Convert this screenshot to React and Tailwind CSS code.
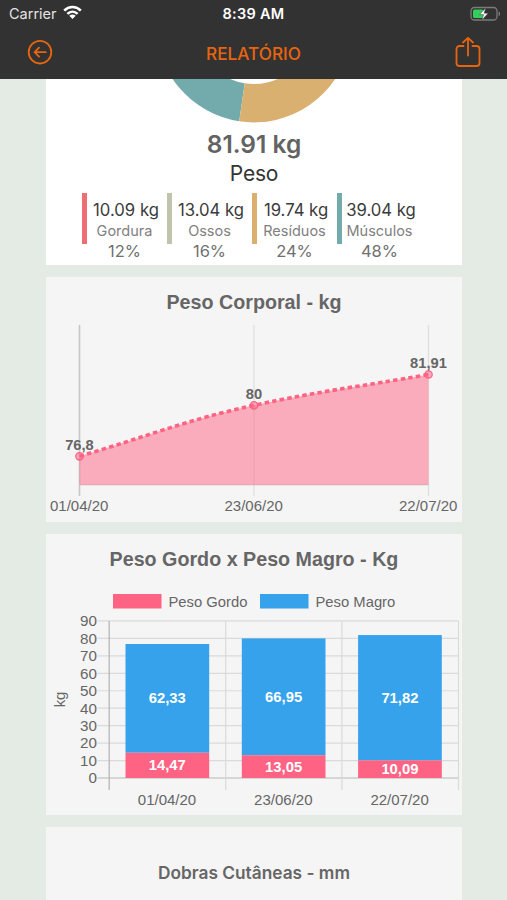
import React from 'react'

const composition = [
	{ value: '10.09 kg', label: 'Gordura', percent: '12%', color: 'bg-[#ee6e73]' },
	{ value: '13.04 kg', label: 'Ossos', percent: '16%', color: 'bg-[#bfc4ad]' },
	{ value: '19.74 kg', label: 'Resíduos', percent: '24%', color: 'bg-[#d9b06f]' },
	{ value: '39.04 kg', label: 'Músculos', percent: '48%', color: 'bg-[#73abad]' },
]

const weights = [
	{ date: '01/04/20', label: '76,8', x: 33.5, y: 179.3 },
	{ date: '23/06/20', label: '80', x: 208, y: 128.3 },
	{ date: '22/07/20', label: '81,91', x: 382.5, y: 97.5 },
]

const masses = [
	{ date: '01/04/20', fat: 14.47, lean: 62.33 },
	{ date: '23/06/20', fat: 13.05, lean: 66.95 },
	{ date: '22/07/20', fat: 10.09, lean: 71.82 },
]

const ticks = [0, 10, 20, 30, 40, 50, 60, 70, 80, 90]

const format = (n) => n.toFixed(2).replace('.', ',')

function StatusBar() {
	return (
		<div className="grid grid-cols-3 items-center h-[27px] pl-[9px] pr-[6px] pt-px text-[14.5px] leading-none text-white">
			<div className="flex items-center gap-[6px]">
				<span className="text-[#e2e2e2] tracking-[0px]">Carrier</span>
				<svg width="19" height="15" viewBox="0 0 19 15" fill="none" stroke="#fff" strokeWidth="2.6" className="-mt-[3px]">
					<path d="M1.2 5.6C6 .8 13 .8 17.8 5.6" />
					<path d="M4.4 8.9C7.4 6 11.6 6 14.6 8.9" />
					<path d="M9.5 14L6.3 10.8C8.2 9.2 10.8 9.2 12.7 10.8Z" fill="#fff" stroke="none" />
				</svg>
			</div>
			<span className="-ml-[3px] text-center font-semibold tracking-[0.3px]">8:39 AM</span>
			<svg width="31" height="16" viewBox="0 0 31 16" className="justify-self-end -mt-px">
				<rect x="1" y="1.5" width="26" height="12.5" rx="3.5" fill="none" stroke="#7c7c7c" strokeWidth="1.3" />
				<path d="M28.6 5.5v4.5c2-.6 2-3.9 0-4.5z" fill="#7c7c7c" />
				<rect x="3" y="3.5" width="10.5" height="8.5" rx="1.5" fill="#33cf5c" />
				<path d="M15.8 1.8L9.5 8.6h4l-1.7 5.6 6.4-7h-4z" fill="#fff" stroke="#323232" strokeWidth=".5" />
			</svg>
		</div>
	)
}

function Header() {
	return (
		<header className="h-[79px] shrink-0 bg-[#323232]">
			<StatusBar />
			<div className="flex items-center justify-between h-[52px] pl-[27px] pr-[26px]">
				<svg width="26" height="26" viewBox="0 0 26 26" fill="none" stroke="#e8650f" strokeWidth="1.8" strokeLinecap="round" strokeLinejoin="round">
					<circle cx="13" cy="12.2" r="11.3" />
					<path d="M18.8 12.2H7.6M12 7.7L7.6 12.2L12 16.7" />
				</svg>
				<h1 className="-ml-px pt-[2px] text-[17.2px] font-medium text-[#e8650f]">RELATÓRIO</h1>
				<svg width="26" height="32" viewBox="0 0 26 32" fill="none" stroke="#e8650f" strokeWidth="1.8" strokeLinecap="round" strokeLinejoin="round" className="-mt-[2px]">
					<path d="M8.5 10H4.5a3 3 0 0 0-3 3v14a3 3 0 0 0 3 3h17a3 3 0 0 0 3-3V13a3 3 0 0 0-3-3h-4" />
					<path d="M13 19.5V2M8 6.5L13 1.8L18 6.5" />
				</svg>
			</div>
		</header>
	)
}

function CompositionCard() {
	return (
		<section className="h-[186px] bg-white text-center">
			{/* lower part of the donut, the rest is scrolled under the header */}
			<svg width="416" height="44" viewBox="0 0 416 44" className="block">
				<path d="M193.2 42.3A98 98 0 0 1 110 -55L148.5 -55A59.5 59.5 0 0 0 198.7 4.3Z" fill="#73abad" />
				<path d="M193.2 42.3A98 98 0 0 0 303.7 -34.1L266.1 -42.3A59.5 59.5 0 0 1 198.7 4.3Z" fill="#d9b06f" />
			</svg>
			<p className="mt-[7px] text-[24.5px] leading-[29px] font-semibold text-[#636363]">81.91 kg</p>
			<p className="text-[21px] leading-[29px] text-[#333] tracking-[-0.2px]">Peso</p>
			<div className="mt-[5px] ml-[36px] flex">
				{composition.map((item) => (
					<div key={item.label} className="flex w-[85px]">
						<span className={`w-[5px] h-[51px] shrink-0 ${item.color}`} />
						<div className="w-[78px] pt-[7px]">
							<p className="text-[16.7px] leading-[21px] text-[#3b3b3b] whitespace-nowrap">{item.value}</p>
							<p className="-ml-[3px] text-[14.5px] leading-[20px] text-[#808080]">{item.label}</p>
							<p className="-ml-[3px] pt-px text-[16.5px] leading-[19px] text-[#707070]">{item.percent}</p>
						</div>
					</div>
				))}
			</div>
		</section>
	)
}

function WeightCard() {
	const curve = 'M33.5 179.3C103.3 158.9 138 143.5 208 128.3C277 113.5 312.7 109.8 382.5 97.5'

	return (
		<section className="h-[245px] bg-[#f5f5f5]">
			<svg width="416" height="245" viewBox="0 0 416 245" fontFamily="Liberation Sans, Arial, sans-serif" fontSize="14.7" fill="#666" textAnchor="middle">
				<text x="208" y="31.5" fontSize="19.7" fontWeight="bold">Peso Corporal - kg</text>
				{weights.map((p, i) => (
					<path key={p.date} d={`M${p.x} 48V219`} stroke={i === 0 ? '#c6c6c6' : '#dfdfdf'} strokeWidth={i === 0 ? 1.6 : 1.3} />
				))}
				<path d="M33.5 208H382.5" stroke="#d6d6d6" strokeWidth="1.2" />
				<path d={`${curve}V208H33.5Z`} fill="#ff6384" fillOpacity=".5" />
				<path d={curve} fill="none" stroke="#ff6384" strokeWidth="3.6" strokeDasharray="4.5 3.2" />
				{weights.map((p) => (
					<g key={p.date}>
						<circle cx={p.x} cy={p.y} r="3.7" fill="#ff6384" fillOpacity=".5" stroke="#ff6384" strokeWidth="1.3" />
						<text x={p.x} y={p.y - 6.8} fontWeight="bold">{p.label}</text>
						<text x={p.x - 0.3} y="234" fontSize="15">{p.date}</text>
					</g>
				))}
			</svg>
		</section>
	)
}

function MassCard() {
	const base = 244
	const unit = 1.745

	return (
		<section className="h-[281px] bg-[#f5f5f5]">
			<svg width="416" height="281" viewBox="0 0 416 281" fontFamily="Liberation Sans, Arial, sans-serif" fontSize="14.8" fill="#666" textAnchor="middle">
				<text x="208" y="31.5" fontSize="19.7" fontWeight="bold">Peso Gordo x Peso Magro - Kg</text>

				<rect x="67" y="60" width="48.5" height="14.5" fill="#ff6384" />
				<text x="122.5" y="72.5" textAnchor="start">Peso Gordo</text>
				<rect x="214" y="60" width="48.5" height="14.5" fill="#36a2eb" />
				<text x="269.5" y="72.5" textAnchor="start">Peso Magro</text>

				{ticks.map((t) => (
					<g key={t}>
						<path d={`M51.5 ${base - t * unit}H412.5`} stroke={t === 0 ? '#b7b7b7' : '#dadada'} strokeWidth="1.2" />
						<text x="51" y={base - t * unit + 5.3} textAnchor="end" fontSize="15.2">{t}</text>
					</g>
				))}
				<path d="M63.2 87V256" stroke="#b7b7b7" strokeWidth="1.3" />
				<path d="M179.7 87V256M295.9 87V256M412.5 87V256" stroke="#dadada" strokeWidth="1.2" />
				<text transform="translate(18.5 165.5) rotate(-90)">kg</text>

				{masses.map((m, i) => {
					const x = 79.5 + i * 116.3
					const fat = m.fat * unit
					const lean = m.lean * unit
					return (
						<g key={m.date}>
							<rect x={x} y={base - fat - lean} width="83.7" height={lean} fill="#36a2eb" />
							<rect x={x} y={base - fat} width="83.7" height={fat} fill="#ff6384" />
							<text x={x + 41.8} y={base - fat - lean / 2 + 5} fontWeight="bold" fill="#fff">{format(m.lean)}</text>
							<text x={x + 41.8} y={base - fat / 2 + 5} fontWeight="bold" fill="#fff">{format(m.fat)}</text>
							<text x={x + 41.5} y="270.5" fontSize="15">{m.date}</text>
						</g>
					)
				})}
			</svg>
		</section>
	)
}

function App() {
	return (
		<div className="flex flex-col w-[507px] h-[900px] overflow-hidden bg-[#e4eae4] font-['Inter',sans-serif]">
			<Header />
			<main className="flex flex-col gap-3 w-[416px] ml-[46px]">
				<CompositionCard />
				<WeightCard />
				<MassCard />
				<section className="h-[120px] shrink-0 bg-[#f5f5f5] pt-[34px] text-center">
					<h2 className="text-[17.3px] leading-[24px] font-semibold text-[#666]">Dobras Cutâneas - mm</h2>
				</section>
			</main>
		</div>
	)
}

export default App
